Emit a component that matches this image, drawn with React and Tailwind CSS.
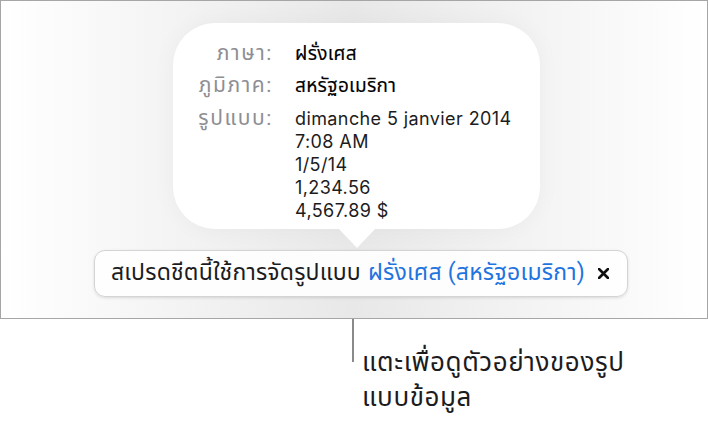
import React from 'react';

const formats = ['dimanche 5 janvier 2014', '7:08 AM', '1/5/14', '1,234.56', '4,567.89 $'];

const Bubble = () => (
  <div className="relative ml-[172px] w-[367px] h-[206px] rounded-[42px] bg-white shadow-[0_0_24px_rgba(0,0,0,0.04)]">
    <div className="grid grid-cols-[100px_1fr] gap-x-[22px] pt-[19px] text-[18px] leading-[23px]">
      <div className="text-right text-[#8e8e93] text-[21px] tracking-[1.6px]">ภาษา:</div>
      <div className="text-black text-[19px] tracking-[0.3px] [-webkit-text-stroke:0.15px_black]">ฝรั่งเศส</div>
      <div className="text-right text-[#8e8e93] mt-[9px] text-[21px] tracking-[1.6px]">ภูมิภาค:</div>
      <div className="text-black mt-[9px] text-[19px] tracking-[0.3px] [-webkit-text-stroke:0.15px_black]">สหรัฐอเมริกา</div>
      <div className="text-right text-[#8e8e93] mt-[10px] text-[21px] tracking-[1.6px]">รูปแบบ:</div>
      <div className="text-[#1c1c1e] mt-[10px] flex flex-col font-['Inter',sans-serif] tracking-[0.4px]">
        {formats.map((f) => (
          <span key={f}>{f}</span>
        ))}
      </div>
    </div>
    {/* pointer */}
    <div className="absolute left-[164px] top-[204px] w-0 h-0 border-l-[20px] border-r-[20px] border-t-[21px] border-l-transparent border-r-transparent border-t-white" />
  </div>
);

const FormatBar = () => (
  <div className="relative ml-[93px] mt-[21px] w-[534px] h-[47px] rounded-[11px] border border-[#d4d4d4] bg-white/90 shadow-[0_1px_3px_rgba(0,0,0,0.12)] flex items-center pl-[16px] text-[23px] tracking-[0.2px] text-[#1c1c1e] whitespace-nowrap">
    <span>สเปรดชีตนี้ใช้การจัดรูปแบบ</span>
    <span className="ml-[7px] text-[#1f74e0]">ฝรั่งเศส (สหรัฐอเมริกา)</span>
    <svg className="ml-[13px]" width="11" height="11" viewBox="0 0 11 11">
      <path d="M1 1L10 10M10 1L1 10" stroke="#111" strokeWidth="2.6" strokeLinecap="round" />
    </svg>
  </div>
);

export default function App() {
  return (
    <div className="w-[708px] h-[431px] bg-white font-['Roboto','Noto_Sans_Thai','Noto_Sans',sans-serif] overflow-hidden">
      <div className="h-[319px] w-[708px] border border-[#a6a6a6] bg-gradient-to-r from-white via-[#e8e8e8] to-white pt-[22px]">
        <Bubble />
        <FormatBar />
      </div>
      <div className="flex">
        <div className="ml-[352px] w-[2px] h-[43px] bg-[#8a8a8a]" />
        <div className="ml-[8px] mt-[26px] text-[26px] tracking-[0.6px] leading-[35px] text-[#1c1c1e]">
          แตะเพื่อดูตัวอย่างของรูป
          <br />
          แบบข้อมูล
        </div>
      </div>
    </div>
  );
}
